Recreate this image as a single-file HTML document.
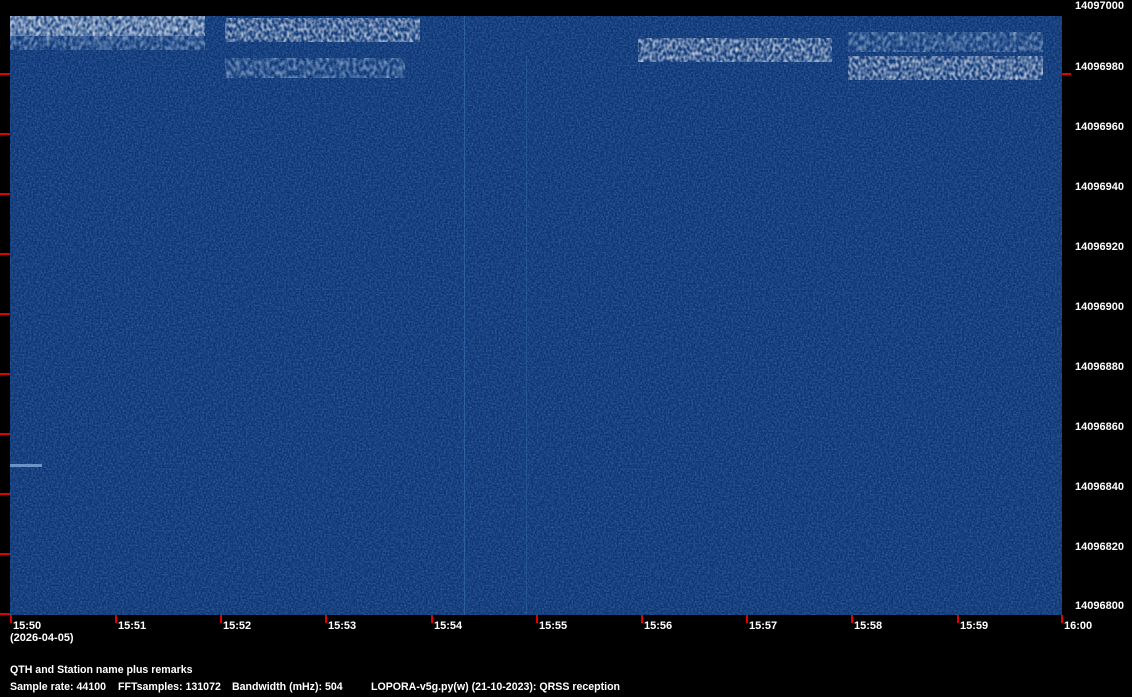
<!DOCTYPE html>
<html><head><style>
body{margin:0;width:1132px;height:697px;background:#000;overflow:hidden;position:relative;font-family:"Liberation Sans",Arial,sans-serif;font-weight:bold;font-size:11px;color:#fff}
.t{position:absolute;white-space:nowrap;line-height:12px}
.b{font-size:10.6px}
.r{position:absolute;background:#e00000}
</style></head><body>
<svg style="position:absolute;left:10px;top:16px" width="1052" height="599">
<defs>
<filter id="n" x="0" y="0" width="100%" height="100%">
<feTurbulence type="fractalNoise" baseFrequency="0.55" numOctaves="2" seed="3"/>
<feColorMatrix type="matrix" values="0 0 0 0 0.35  0 0 0 0 0.6  0 0 0 0 1  0.9 0 0 0 -0.3"/>
</filter>
<filter id="s" x="0" y="0" width="100%" height="100%">
<feTurbulence type="fractalNoise" baseFrequency="0.35 0.25" numOctaves="1" seed="7"/>
<feColorMatrix type="matrix" values="0 0 0 0 1  0 0 0 0 1  0 0 0 0 1  1.6 0 0 0 -0.55"/>
</filter>
<filter id="f" x="0" y="0" width="100%" height="100%">
<feTurbulence type="fractalNoise" baseFrequency="0.3 0.2" numOctaves="1" seed="11"/>
<feColorMatrix type="matrix" values="0 0 0 0 0.7  0 0 0 0 0.85  0 0 0 0 1  1.2 0 0 0 -0.45"/>
</filter>
</defs>
<rect width="1052" height="599" fill="#0c3575"/>
<rect width="1052" height="599" filter="url(#n)" opacity="0.55"/>
<rect x="454" y="0" width="1" height="599" fill="#3a6fb0" opacity="0.6"/>
<rect x="516" y="40" width="1" height="559" fill="#2f63a6" opacity="0.5"/>
<g>
<rect x="0" y="0" width="195" height="34" filter="url(#f)"/>
<rect x="0" y="0" width="195" height="20" filter="url(#s)"/>
<rect x="215" y="2" width="195" height="24" filter="url(#s)"/>
<rect x="215" y="42" width="180" height="20" filter="url(#f)"/>
<rect x="628" y="22" width="194" height="24" filter="url(#s)"/>
<rect x="838" y="16" width="195" height="20" filter="url(#f)"/>
<rect x="838" y="40" width="195" height="24" filter="url(#s)"/>
<rect x="0" y="448" width="32" height="3" fill="#8fb6e6" opacity="0.7"/>
</g>
</svg>
<div class="r" style="left:0;top:73px;width:10px;height:2px"></div>
<div class="r" style="left:0;top:133px;width:10px;height:2px"></div>
<div class="r" style="left:0;top:193px;width:10px;height:2px"></div>
<div class="r" style="left:0;top:253px;width:10px;height:2px"></div>
<div class="r" style="left:0;top:313px;width:10px;height:2px"></div>
<div class="r" style="left:0;top:373px;width:10px;height:2px"></div>
<div class="r" style="left:0;top:433px;width:10px;height:2px"></div>
<div class="r" style="left:0;top:493px;width:10px;height:2px"></div>
<div class="r" style="left:0;top:553px;width:10px;height:2px"></div>
<div class="r" style="left:0;top:613px;width:10px;height:2px"></div>
<div class="r" style="left:1062px;top:73px;width:9px;height:2px"></div>
<div class="t" style="left:1075px;top:0">14097000</div>
<div class="t" style="left:1075px;top:61px">14096980</div>
<div class="t" style="left:1075px;top:121px">14096960</div>
<div class="t" style="left:1075px;top:181px">14096940</div>
<div class="t" style="left:1075px;top:241px">14096920</div>
<div class="t" style="left:1075px;top:301px">14096900</div>
<div class="t" style="left:1075px;top:361px">14096880</div>
<div class="t" style="left:1075px;top:421px">14096860</div>
<div class="t" style="left:1075px;top:481px">14096840</div>
<div class="t" style="left:1075px;top:541px">14096820</div>
<div class="t" style="left:1075px;top:600px">14096800</div>
<div class="r" style="left:10px;top:615px;width:2px;height:8px"></div>
<div class="r" style="left:115px;top:615px;width:2px;height:8px"></div>
<div class="r" style="left:220px;top:615px;width:2px;height:8px"></div>
<div class="r" style="left:325px;top:615px;width:2px;height:8px"></div>
<div class="r" style="left:431px;top:615px;width:2px;height:8px"></div>
<div class="r" style="left:536px;top:615px;width:2px;height:8px"></div>
<div class="r" style="left:641px;top:615px;width:2px;height:8px"></div>
<div class="r" style="left:746px;top:615px;width:2px;height:8px"></div>
<div class="r" style="left:851px;top:615px;width:2px;height:8px"></div>
<div class="r" style="left:957px;top:615px;width:2px;height:8px"></div>
<div class="r" style="left:1061px;top:615px;width:2px;height:8px"></div>
<div class="t" style="left:13px;top:620px">15:50</div>
<div class="t" style="left:118px;top:620px">15:51</div>
<div class="t" style="left:223px;top:620px">15:52</div>
<div class="t" style="left:328px;top:620px">15:53</div>
<div class="t" style="left:434px;top:620px">15:54</div>
<div class="t" style="left:539px;top:620px">15:55</div>
<div class="t" style="left:644px;top:620px">15:56</div>
<div class="t" style="left:749px;top:620px">15:57</div>
<div class="t" style="left:854px;top:620px">15:58</div>
<div class="t" style="left:960px;top:620px">15:59</div>
<div class="t" style="left:1064px;top:620px">16:00</div>
<div class="t" style="left:10px;top:632px">(2026-04-05)</div>
<div class="t b" style="left:10px;top:664px">QTH and Station name plus remarks</div>
<div class="t b" style="left:10px;top:681px">Sample rate: 44100</div>
<div class="t b" style="left:118px;top:681px">FFTsamples: 131072</div>
<div class="t b" style="left:232px;top:681px">Bandwidth (mHz): 504</div>
<div class="t b" style="left:371px;top:681px">LOPORA-v5g.py(w) (21-10-2023): QRSS reception</div>
</body></html>
